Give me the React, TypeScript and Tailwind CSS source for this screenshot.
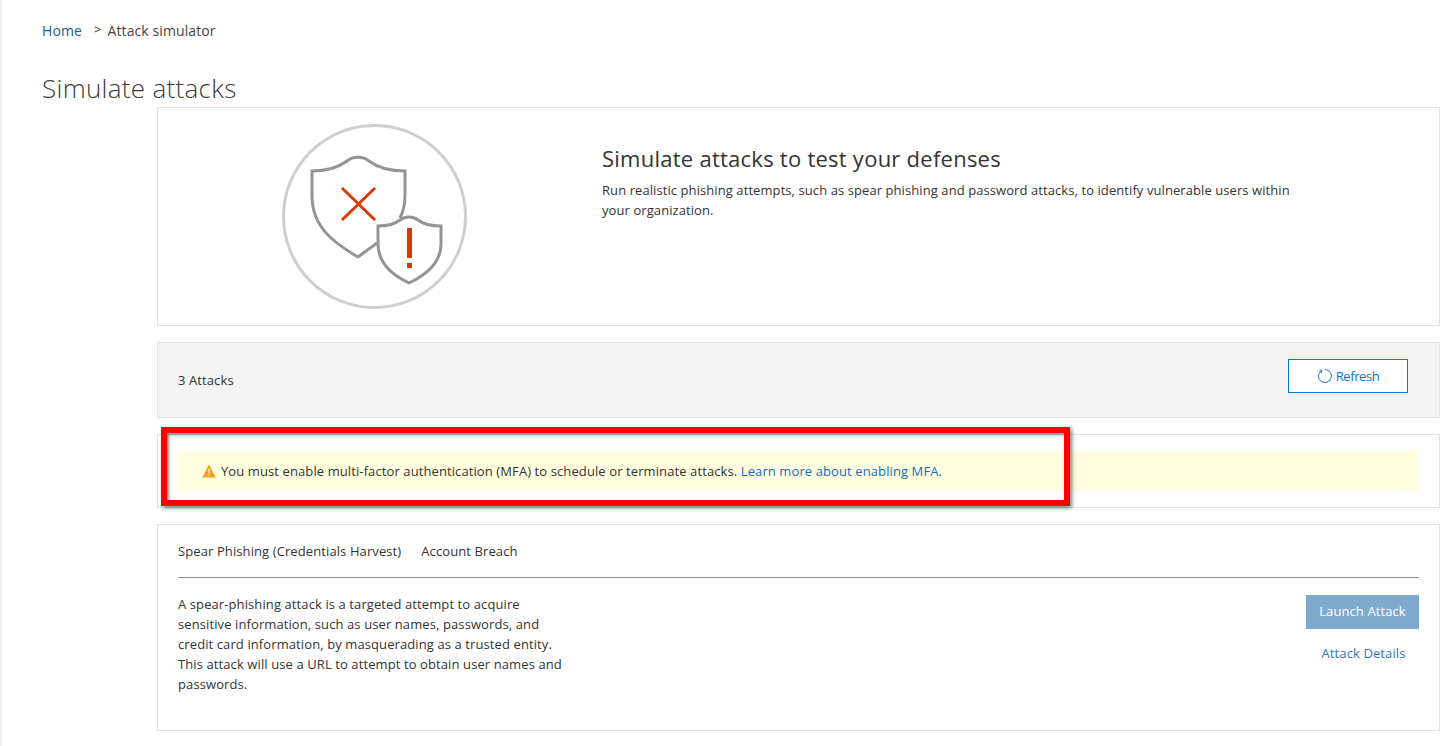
const cardClass = 'border border-[#e3e3e3] bg-white';

function HeroIllustration() {
  return (
    <svg width="186" height="186" viewBox="0 0 186 186" fill="none">
      <circle cx="92.5" cy="92.5" r="91" stroke="#cfcfcf" strokeWidth="3" />
      <path
        d="M95 119 L76 133 C52 119 30 103 30 72 V47 C46 47 57 43 65 37 C71 32 81 32 87 37 C95 43 107 47 123 47 V72 C123 80 121 88 118 94"
        stroke="#949494"
        strokeWidth="3"
      />
      <path d="M60 64 L93 96 M93 64 L60 96" stroke="#d83b01" strokeWidth="3" />
      <path
        d="M127 159 C108 150 96 138 96 120 V102 C106 102 113 100 118 96 C123 92 131 92 136 96 C141 100 149 102 159 102 V120 C159 138 146 150 127 159 Z"
        stroke="#949494"
        strokeWidth="3"
      />
      <path d="M125 104 H130 V134 H125 Z M125 139 H130 V144 H125 Z" fill="#d83b01" />
    </svg>
  );
}

function WarningIcon() {
  return (
    <svg width="14" height="14" viewBox="0 0 14 14">
      <path d="M7 0.500 L13.800 13.500 H0.200 Z" fill="#f7a21b" />
      <path d="M6.400 5 H7.600 V9.500 H6.400 Z M6.400 10.500 H7.600 V11.800 H6.400 Z" fill="#fff" />
    </svg>
  );
}

export default function App() {
  return (
    <div className="relative h-[746px] w-[1447px] overflow-hidden border-l-2 border-[#f0f0f0] bg-white font-['Open_Sans','Noto_Sans',sans-serif] text-[13px] tracking-[0.1px] text-[#333]">
      <nav className="flex h-[60px] items-center pl-10 text-[14px]">
        <span className="text-[#2a5a86]">Home</span>
        <span className="ml-3 mr-[6px] text-[13px]">&gt;</span>
        <span className="text-[#444]">Attack simulator</span>
      </nav>
      <h1 className="ml-10 h-[47px] pt-[10px] text-[26px] font-light leading-[36px] tracking-[0.3px] text-[#3b3b3b]">Simulate attacks</h1>

      <div className="ml-[155px] mr-[7px] flex flex-col gap-4">
        <section className={`${cardClass} flex h-[219px]`}>
          <div className="h-[217px] w-[444px] shrink-0 pl-[124px] pt-4">
            <HeroIllustration />
          </div>
          <div className="pt-[35px]">
            <h2 className="text-[22px] leading-[30px] tracking-[0.25px]">Simulate attacks to test your defenses</h2>
            <p className="mt-[7px] w-[700px] leading-5 tracking-[0.08px]">
              Run realistic phishing attempts, such as spear phishing and password attacks, to identify vulnerable users within
              <br />
              your organization.
            </p>
          </div>
        </section>

        <section className="flex h-[76px] items-center justify-between border border-[#e3e3e3] bg-[#f3f3f3] pl-5 pr-[31px]">
          <span className="pt-[2px]">3 Attacks</span>
          <button className="mb-2 flex h-[34px] w-[120px] items-center justify-center gap-[3px] border border-[#0078d4] bg-white tracking-[-0.4px] text-[#0078d4]">
            <svg width="16" height="16" viewBox="0 0 16 16" fill="none" stroke="#3b8ad0" strokeWidth="1.1">
              <path d="M4.500 2.500 A6.500 6.500 0 1 0 8 1.500" />
              <path d="M2.500 1.500 L4.800 2.500 L4 5" />
            </svg>
            <span className="pt-[2px]">Refresh</span>
          </button>
        </section>

        <section className={`${cardClass} h-[74px] px-5 pt-4`}>
          <div className="flex h-10 items-center gap-[5px] bg-[#ffffdf] pl-6">
            <WarningIcon />
            <span className="pt-[2px]">
              You must enable multi-factor authentication (MFA) to schedule or terminate attacks.{' '}
              <span className="text-[#106ebe]">Learn more about enabling MFA.</span>
            </span>
          </div>
        </section>

        <section className={`${cardClass} h-[207px] px-5`}>
          <div className="flex h-[53px] items-center gap-5 border-b border-[#8a8f99] pt-[2px]">
            <span>Spear Phishing (Credentials Harvest)</span>
            <span>Account Breach</span>
          </div>
          <div className="flex justify-between">
            <p className="mt-4 w-[388px] leading-5">
              A spear-phishing attack is a targeted attempt to acquire sensitive information, such as user names, passwords, and credit card information, by masquerading as a trusted entity. This attack will use a URL to attempt to obtain user names and passwords.
            </p>
            <div className="flex flex-col items-center pt-[17px]">
              <button className="h-[34px] w-[113px] bg-[#7fa9cf] text-white">Launch Attack</button>
              <span className="ml-[2px] mt-[15px] text-[#2b79bd]">Attack Details</span>
            </div>
          </div>
        </section>
      </div>

      <div className="absolute left-[159px] top-[427px] h-[79px] w-[909px] border-[6px] border-[#ff0000] shadow-[2px_2px_4px_rgba(0,0,0,0.5),inset_2px_2px_3px_rgba(0,0,0,0.45)]" />
    </div>
  );
}
